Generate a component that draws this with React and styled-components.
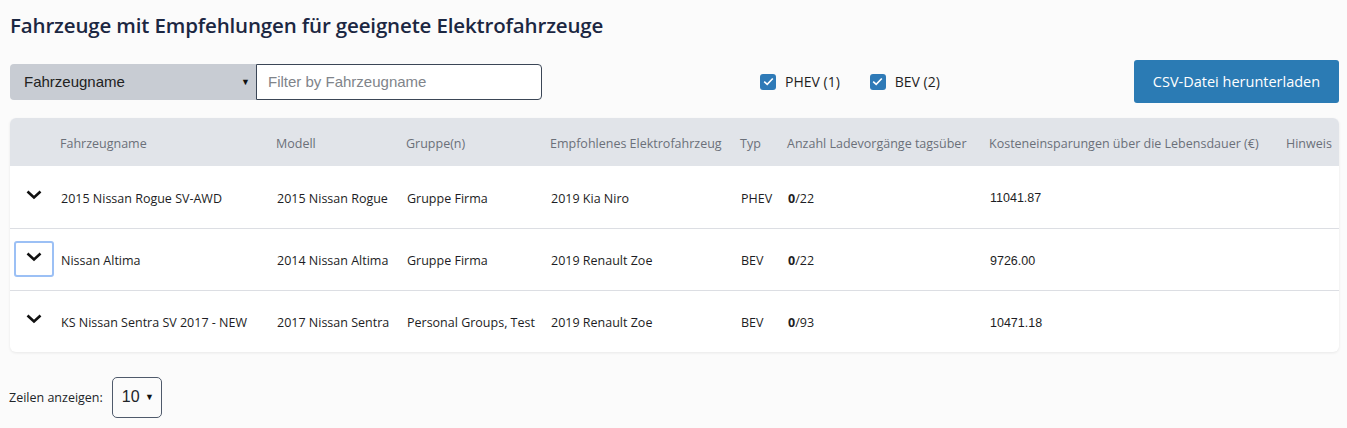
import React from 'react';
import styled, { createGlobalStyle } from 'styled-components';

const GlobalStyle = createGlobalStyle`
  body {
    margin: 0;
    background: #fbfbfb;
    font-family: "Open Sans", "Noto Sans", sans-serif;
    color: #212529;
  }
`;

const Page = styled.div`
  padding: 11px 8px 0 10px;
`;

const Title = styled.h1`
  margin: 0 0 21px 0;
  font-size: 20.5px;
  font-weight: 600;
  color: #1b2742;
  letter-spacing: -0.15px;
`;

const Toolbar = styled.div`
  display: flex;
  align-items: center;
  height: 43px;
  margin-bottom: 15px;
`;

const FilterGroup = styled.div`
  display: flex;
  height: 36px;
`;

const FieldSelect = styled.div`
  width: 246px;
  box-sizing: border-box;
  background: #c8ccd3;
  border-radius: 4px 0 0 4px;
  display: flex;
  align-items: center;
  justify-content: space-between;
  padding: 0 6px 0 14px;
  font-family: "Liberation Sans", Arial, sans-serif;
  font-size: 15px;
  color: #222;
`;

const Caret = styled.span`
  font-size: 9px;
  color: #111;
`;

const FilterInput = styled.input`
  width: 286px;
  box-sizing: border-box;
  border: 1px solid #3b4656;
  border-radius: 0 4px 4px 0;
  padding: 0 11px;
  font-family: "Liberation Sans", Arial, sans-serif;
  font-size: 15px;
  outline: none;
  &::placeholder { color: #80848a; }
`;

const Checks = styled.div`
  display: flex;
  gap: 30px;
  margin-left: 218px;
`;

const CheckLabel = styled.label`
  display: flex;
  align-items: center;
  gap: 9px;
  font-size: 14px;
  color: #1f1f1f;
`;

const Box = styled.span`
  width: 16px;
  height: 16px;
  border-radius: 3px;
  background: #2e7ab7;
  display: flex;
  align-items: center;
  justify-content: center;
`;

const DownloadButton = styled.button`
  margin-left: auto;
  width: 205px;
  height: 43px;
  background: #2b7bb4;
  color: #fff;
  border: none;
  border-radius: 3px;
  font-family: "Open Sans", "Noto Sans", sans-serif;
  font-size: 14.5px;
`;

const Card = styled.div`
  width: 1329px;
  background: #fff;
  border-radius: 6px;
  box-shadow: 0 1px 3px rgba(0, 0, 0, 0.08);
  overflow: hidden;
`;

const Table = styled.table`
  width: 100%;
  border-collapse: collapse;
  table-layout: fixed;
`;

const Th = styled.th`
  height: 46px;
  background: #e1e4e9;
  text-align: left;
  font-weight: 400;
  font-size: 12.5px;
  color: #6b7079;
  padding: 2px 0 0 8px;
  white-space: nowrap;
  overflow: hidden;
`;

const Tr = styled.tr`
  height: 62px;
  border-top: ${p => (p.$first ? 'none' : '1px solid #dcdee3')};
`;

const Td = styled.td`
  font-size: 12.5px;
  color: #1d1d24;
  padding: 3px 0 0 ${p => (p.$pad ?? 9)}px;
  white-space: nowrap;
  font-family: ${p => (p.$arial ? '"Liberation Sans", Arial, sans-serif' : 'inherit')};
`;

const Toggle = styled.button`
  width: 40px;
  height: 36px;
  margin: -3px 0 0 4px;
  background: transparent;
  box-sizing: border-box;
  border: 2px solid ${p => (p.$focused ? '#9cc0f5' : 'transparent')};
  border-radius: 3px;
  display: flex;
  align-items: center;
  justify-content: center;
  padding: 0 0 4px 0;
`;

const Footer = styled.div`
  display: flex;
  align-items: center;
  gap: 9px;
  margin-top: 25px;
  margin-left: -1px;
  font-size: 12.5px;
`;

const RowsSelect = styled.div`
  width: 50px;
  height: 41px;
  box-sizing: border-box;
  border: 1px solid #4f5a6b;
  border-radius: 5px;
  display: flex;
  align-items: center;
  justify-content: space-between;
  padding: 0 7px 2px 9px;
  font-family: "Liberation Sans", Arial, sans-serif;
  font-size: 16px;
`;

const Chevron = () => (
  <svg width="16" height="10" viewBox="0 0 16 10">
    <path d="M1.5 1.5 L8 7.5 L14.5 1.5" fill="none" stroke="#111" strokeWidth="2.6" />
  </svg>
);

const Tick = () => (
  <svg width="11" height="9" viewBox="0 0 11 9">
    <path d="M1.2 4.6 L4.2 7.4 L9.8 1.5" fill="none" stroke="#fff" strokeWidth="1.6" />
  </svg>
);

const columns = [
  ['', 42],
  ['Fahrzeugname', 216],
  ['Modell', 130],
  ['Gruppe(n)', 144],
  ['Empfohlenes Elektrofahrzeug', 190],
  ['Typ', 47],
  ['Anzahl Ladevorgänge tagsüber', 202],
  ['Kosteneinsparungen über die Lebensdauer (€)', 297],
  ['Hinweis', 61],
];

const rows = [
  { name: '2015 Nissan Rogue SV-AWD', model: '2015 Nissan Rogue', group: 'Gruppe Firma', ev: '2019 Kia Niro', type: 'PHEV', total: 22, cost: '11041.87' },
  { name: 'Nissan Altima', model: '2014 Nissan Altima', group: 'Gruppe Firma', ev: '2019 Renault Zoe', type: 'BEV', total: 22, cost: '9726.00', focused: true },
  { name: 'KS Nissan Sentra SV 2017 - NEW', model: '2017 Nissan Sentra', group: 'Personal Groups, Test', ev: '2019 Renault Zoe', type: 'BEV', total: 93, cost: '10471.18' },
];

export default function App() {
  return (
    <>
      <GlobalStyle />
      <Page>
        <Title>Fahrzeuge mit Empfehlungen für geeignete Elektrofahrzeuge</Title>
        <Toolbar>
          <FilterGroup>
            <FieldSelect>
              Fahrzeugname <Caret>▼</Caret>
            </FieldSelect>
            <FilterInput placeholder="Filter by Fahrzeugname" />
          </FilterGroup>
          <Checks>
            <CheckLabel><Box><Tick /></Box>PHEV (1)</CheckLabel>
            <CheckLabel><Box><Tick /></Box>BEV (2)</CheckLabel>
          </Checks>
          <DownloadButton>CSV-Datei herunterladen</DownloadButton>
        </Toolbar>
        <Card>
          <Table>
            <colgroup>
              {columns.map(([, w], i) => <col key={i} style={{ width: w }} />)}
            </colgroup>
            <thead>
              <tr>
                {columns.map(([label], i) => <Th key={i}>{label}</Th>)}
              </tr>
            </thead>
            <tbody>
              {rows.map((r, i) => (
                <Tr key={i} $first={i === 0}>
                  <Td $pad={0}>
                    <Toggle $focused={r.focused}><Chevron /></Toggle>
                  </Td>
                  <Td>{r.name}</Td>
                  <Td>{r.model}</Td>
                  <Td>{r.group}</Td>
                  <Td>{r.ev}</Td>
                  <Td>{r.type}</Td>
                  <Td><b>0</b>/{r.total}</Td>
                  <Td $arial>{r.cost}</Td>
                  <Td />
                </Tr>
              ))}
            </tbody>
          </Table>
        </Card>
        <Footer>
          Zeilen anzeigen:
          <RowsSelect>10 <Caret>▼</Caret></RowsSelect>
        </Footer>
      </Page>
    </>
  );
}
